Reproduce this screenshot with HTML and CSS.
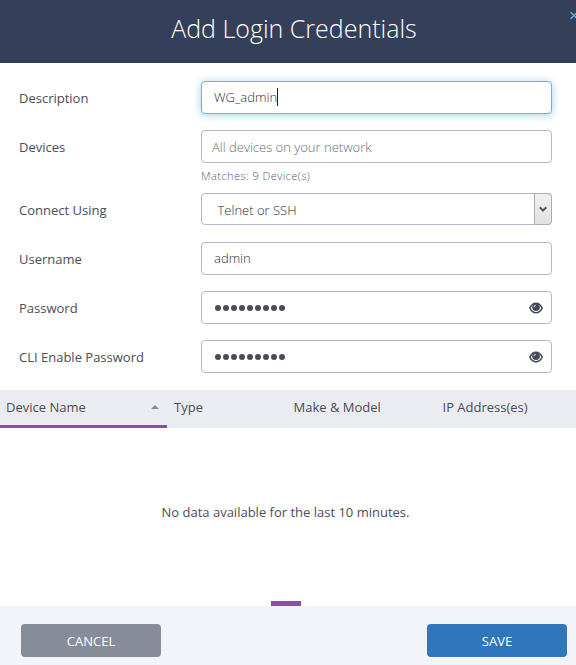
FILE: index.html
```html
<!DOCTYPE html>
<html lang="en">
<head>
<meta charset="utf-8">
<title>Add Login Credentials</title>
<link rel="stylesheet" href="styles.css">
</head>
<body>
<div class="dialog">
  <header class="dialog-header">
    <h1 class="title">Add Login Credentials</h1>
    <svg class="close" width="8" height="9" viewBox="0 0 8 9"><path d="M.5 1 7.5 8M7.5 1 .5 8"/></svg>
  </header>
  <main class="form">
    <div class="row">
      <span class="label">Description</span>
      <div class="input focused"><span class="value">WG_admin</span><span class="caret"></span></div>
    </div>
    <div class="row">
      <span class="label">Devices</span>
      <div class="input placeholder"><span class="value">All devices on your network</span></div>
    </div>
    <div class="hint">Matches: 9 Device(s)</div>
    <div class="row">
      <span class="label">Connect Using</span>
      <div class="input select"><span class="value">Telnet or SSH</span>
        <span class="arrow"><svg width="8" height="7" viewBox="0 0 8 7"><path d="M.8 1.2 4 4.6 7.2 1.2"/></svg></span>
      </div>
    </div>
    <div class="row">
      <span class="label">Username</span>
      <div class="input"><span class="value">admin</span></div>
    </div>
    <div class="row">
      <span class="label">Password</span>
      <div class="input">
        <span class="dots"><i></i><i></i><i></i><i></i><i></i><i></i><i></i><i></i><i></i></span>
        <svg class="eye" width="14" height="12" viewBox="0 0 14 12"><path class="lid" d="M.8 6Q3.200 1.200 7 1.200T13.200 6Q10.800 10.800 7 10.800T.8 6Z"/><circle cx="7" cy="5.200" r="3.800"/><path class="glint" d="M5 5.200Q5 3.400 6.800 3.200"/></svg>
      </div>
    </div>
    <div class="row">
      <span class="label">CLI Enable Password</span>
      <div class="input">
        <span class="dots"><i></i><i></i><i></i><i></i><i></i><i></i><i></i><i></i><i></i></span>
        <svg class="eye" width="14" height="12" viewBox="0 0 14 12"><path class="lid" d="M.8 6Q3.200 1.200 7 1.200T13.200 6Q10.800 10.800 7 10.800T.8 6Z"/><circle cx="7" cy="5.200" r="3.800"/><path class="glint" d="M5 5.200Q5 3.400 6.800 3.200"/></svg>
      </div>
    </div>
  </main>
  <div class="table-head">
    <div class="col sorted"><span>Device Name</span><span class="sort"></span></div>
    <div class="col">Type</div>
    <div class="col">Make &amp; Model</div>
    <div class="col">IP Address(es)</div>
  </div>
  <div class="table-body">
    <p class="empty">No data available for the last 10 minutes.</p>
    <div class="handle"></div>
  </div>
  <footer class="dialog-footer">
    <button class="btn cancel">CANCEL</button>
    <button class="btn save">SAVE</button>
  </footer>
</div>
</body>
</html>
```
FILE: styles.css
```css
* { box-sizing: border-box; }
body {
  margin: 0;
  font: 13px/18px "Open Sans", sans-serif;
  color: #4a4d57;
  background: #fff;
}
.dialog {
  width: 576px;
  height: 665px;
  display: flex;
  flex-direction: column;
  overflow: hidden;
}
.dialog-header {
  position: relative;
  height: 63px;
  flex: none;
  background: #34405a;
  display: flex;
  justify-content: center;
}
.title {
  margin: 10px 0 0 12px;
  font-size: 25px;
  line-height: 36px;
  font-weight: 300;
  color: #fff;
}
.close {
  position: absolute;
  left: 570px;
  top: 11px;
  fill: none;
  stroke: #76a9dc;
  stroke-width: 1.3;
}
.form {
  height: 327px;
  flex: none;
  padding: 18px 24px 0 19px;
}
.row {
  display: grid;
  grid-template-columns: 182px 351px;
  align-items: center;
  height: 33px;
  margin-bottom: 16px;
}
.label { padding-top: 1px; }
.input {
  height: 33px;
  border: 1px solid #b4b8c8;
  border-radius: 4px;
  background: #fff;
  display: flex;
  align-items: center;
  padding: 0 8px 1px 12px;
  font-weight: 300;
  color: #2c2f38;
}
.focused {
  border-color: #66afe9;
  box-shadow: 0 1px 8px rgba(102, 175, 233, .6);
}
.caret {
  width: 1px;
  height: 18px;
  background: #222;
}
.placeholder {
  padding-left: 10px;
  padding-bottom: 0;
  color: #696c78;
}
.hint {
  height: 18px;
  margin: -13px 0 9px 182px;
  font-size: 11px;
  letter-spacing: .45px;
  font-weight: 300;
  line-height: 19px;
  color: #565c6c;
}
.select {
  height: 32px;
  align-self: start;
  padding: 2px 0 0 15.500px;
  position: relative;
}
.arrow {
  position: absolute;
  right: -1px;
  top: -1px;
  width: 18px;
  height: 32px;
  border: 1px solid #acacb0;
  border-radius: 0 4px 4px 0;
  background: linear-gradient(#f0f0f0, #e2e2e2);
  display: flex;
  align-items: center;
  justify-content: center;
}
.arrow path {
  fill: none;
  stroke: #555;
  stroke-width: 2;
}
.dots {
  display: flex;
  gap: 2px;
  padding: 2px 0 0 1px;
}
.dots i {
  width: 6px;
  height: 6px;
  border-radius: 50%;
  background: #4a4d57;
}
.eye {
  margin-left: auto;
  margin-top: 2px;
}
.lid {
  fill: none;
  stroke: #444854;
  stroke-width: 1.6;
}
.eye circle { fill: #444854; }
.glint {
  fill: none;
  stroke: #fff;
  stroke-width: .9;
}
.table-head {
  height: 38px;
  flex: none;
  background: #ebecf2;
  display: grid;
  grid-template-columns: 167px 119.500px 149px 1fr;
}
.col { padding: 8px 0 0 7px; }
.sorted {
  display: flex;
  justify-content: space-between;
  padding: 8px 8px 0 6px;
  border-bottom: 3px solid #8850a0;
}
.sort {
  width: 0;
  height: 0;
  margin-top: 7px;
  border: 4px solid transparent;
  border-top: 0;
  border-bottom-color: #858895;
}
.table-body {
  height: 178px;
  flex: none;
  display: flex;
  flex-direction: column;
  justify-content: space-between;
  align-items: center;
}
.empty { margin: 75px 5px 0 0; }
.handle {
  width: 30px;
  height: 5px;
  margin-right: 4px;
  background: #8850a0;
}
.dialog-footer {
  flex: 1;
  background: #f3f4f9;
  display: flex;
  justify-content: space-between;
  padding: 18px 9px 8px 21px;
}
.btn {
  width: 140px;
  height: 33px;
  border: 0;
  border-radius: 4px;
  padding: 0;
  font: 13px/18px "Open Sans", sans-serif;
  color: #fff;
}
.cancel { background: #878d98; }
.save { background: #2f76bd; }
```
